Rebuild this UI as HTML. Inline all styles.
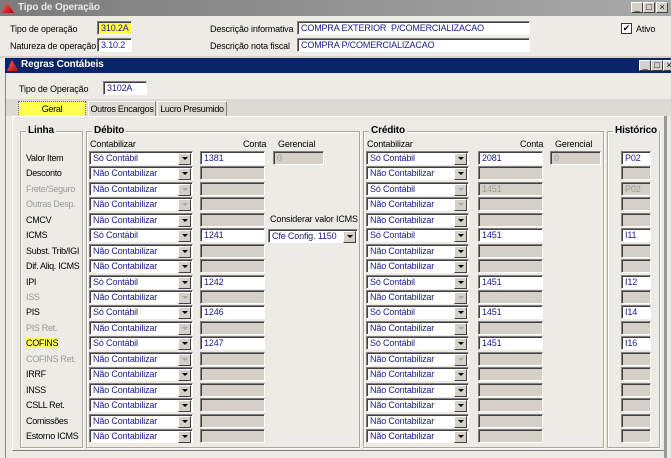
<!DOCTYPE html><html><head><meta charset="utf-8"><style>
*{box-sizing:border-box;margin:0;padding:0}
body{width:671px;height:458px;overflow:hidden;background:#ecebe6;font-family:"Liberation Sans",sans-serif;font-size:9px;letter-spacing:-0.15px;color:#000;position:relative}
.a{position:absolute;white-space:nowrap}
.t1{left:0;top:0;width:671px;height:16px;background:linear-gradient(90deg,#7b7b7b,#a9a9a9);color:#e8e8e8;font-weight:bold;font-size:10px;padding:2px 0 0 18px}
.t2{left:5px;top:58px;width:666px;height:15px;background:#0a246a;color:#fff;font-weight:bold;font-size:10px;padding:1px 0 0 16px}
.ico{position:absolute;left:2px;top:2px;width:12px;height:11px;background:linear-gradient(135deg,#f66,#a00);clip-path:polygon(0 100%,40% 0,100% 100%)}
.in{position:absolute;height:14px;background:#fff;border:1px solid;border-color:#808080 #fff #fff #808080;box-shadow:inset 1px 1px 0 #404040;color:#1a1a8c;padding:1px 0 0 3px;font-size:9px;white-space:nowrap;overflow:hidden}
.g{background:#d4d0c8;color:#999}
.sel{position:absolute;height:14px;background:#fff;border:1px solid;border-color:#808080 #fff #fff #808080;box-shadow:inset 1px 1px 0 #404040;color:#1a1a8c;padding:1px 0 0 3px;font-size:9px;white-space:nowrap}
.sel:after{content:"";position:absolute;right:1px;top:1px;width:11px;height:10px;background:#d4d0c8;border:1px solid;border-color:#fff #404040 #404040 #fff}
.sel:before{content:"";position:absolute;right:4px;top:5px;border:3px solid transparent;border-top:3px solid #000;z-index:2;border-bottom:0}
.dis:before{border-top-color:#aaa}
.row{position:absolute;left:0;width:671px;height:15px}
.lb{position:absolute;left:26px;top:2px;font-size:9px;white-space:nowrap;letter-spacing:-0.3px}
.lg{color:#999}
.grp{position:absolute;border:1px solid #aca899;box-shadow:1px 1px 0 #fff inset,1px 1px 0 #fff}
.gt{position:absolute;top:-7px;left:5px;background:#ecebe6;padding:0 2px;font-weight:bold;font-size:10px;white-space:nowrap}
.btn{position:absolute;width:12px;height:11px;background:#d4d0c8;border:1px solid;border-color:#fff #404040 #404040 #fff;font-size:9px;line-height:9px;text-align:center;color:#000}
.tab{position:absolute;top:101px;height:16px;border:1px solid;border-color:#fff #808080 transparent #fff;padding:2px 0 0;font-size:9px;text-align:center;white-space:nowrap;letter-spacing:-0.3px}
</style></head><body>
<div class="a t1"><div class="ico"></div>Tipo de Operação</div>
<div class="btn" style="left:631px;top:2px">_</div><div class="btn" style="left:643px;top:2px">□</div><div class="btn" style="left:656px;top:2px">×</div>
<div class="a" style="left:10px;top:24px">Tipo de operação</div>
<div class="in" style="left:97px;top:21px;width:35px;background:#ffff40">310.2A</div>
<div class="a" style="left:10px;top:41px">Natureza de operação</div>
<div class="in" style="left:97px;top:38px;width:35px">3.10.2</div>
<div class="a" style="left:210px;top:24px">Descrição informativa</div>
<div class="in" style="left:297px;top:21px;width:233px">COMPRA EXTERIOR&nbsp; P/COMERCIALIZACAO</div>
<div class="a" style="left:210px;top:41px">Descrição nota fiscal</div>
<div class="in" style="left:297px;top:38px;width:233px">COMPRA P/COMERCIALIZACAO</div>
<div class="a" style="left:621px;top:23px;width:11px;height:11px;border:1px solid #333;background:#fff;font-size:9px;line-height:9px;text-align:center">✔</div>
<div class="a" style="left:636px;top:24px">Ativo</div>
<div class="a" style="left:0;top:56px;width:671px;height:2px;background:#d4d0c8"></div>
<div class="a t2"><div class="ico"></div>Regras Contábeis</div>
<div class="btn" style="left:639px;top:60px">_</div><div class="btn" style="left:651px;top:60px">□</div><div class="btn" style="left:663px;top:60px">×</div>
<div class="a" style="left:5px;top:73px;width:1px;height:385px;background:#888"></div>
<div class="a" style="left:19px;top:84px">Tipo de Operação</div>
<div class="in" style="left:103px;top:81px;width:44px">3102A</div>
<div class="a" style="left:6px;top:99px;width:665px;height:17px;background:#dcdad3"></div>
<div class="tab" style="left:18px;width:68px;background:#ffff50;border:1px dotted #666">Geral</div>
<div class="tab" style="left:88px;width:68px">Outros Encargos</div>
<div class="tab" style="left:157px;width:70px">Lucro Presumido</div>
<div class="a" style="left:12px;top:116px;width:653px;height:335px;border:1px solid;border-color:#fff #808080 #808080 #fff"></div>
<div class="a" style="left:664px;top:116px;width:3px;height:342px;background:#999"></div>
<div class="grp" style="left:20px;top:131px;width:63px;height:317px"><span class="gt">Linha</span></div>
<div class="grp" style="left:86px;top:131px;width:274px;height:317px"><span class="gt">Débito</span></div>
<div class="grp" style="left:363px;top:131px;width:241px;height:317px"><span class="gt">Crédito</span></div>
<div class="grp" style="left:607px;top:131px;width:53px;height:317px"><span class="gt">Histórico</span></div>
<div class="a" style="left:90px;top:139px">Contabilizar</div>
<div class="a" style="left:243px;top:139px">Conta</div>
<div class="a" style="left:278px;top:139px">Gerencial</div>
<div class="a" style="left:367px;top:139px">Contabilizar</div>
<div class="a" style="left:520px;top:139px">Conta</div>
<div class="a" style="left:555px;top:139px">Gerencial</div>
<div class="a" style="left:270px;top:214px">Considerar valor ICMS</div>
<div class="sel" style="left:268px;top:229px;width:90px">Cfe Config. 1150</div>
<div class="in g" style="left:273px;top:151px;width:51px">0</div>
<div class="in g" style="left:550px;top:151px;width:51px">0</div>

<div class="row" style="top:151px"><span class="lb">Valor Item</span><div class="sel" style="left:89px;width:104px">Só Contábil</div><div class="in" style="left:200px;width:65px">1381</div><div class="sel" style="left:366px;width:103px">Só Contábil</div><div class="in" style="left:478px;width:65px">2081</div><div class="in" style="left:621px;width:30px">P02</div></div>
<div class="row" style="top:166px"><span class="lb">Desconto</span><div class="sel" style="left:89px;width:104px">Não Contabilizar</div><div class="in g" style="left:200px;width:65px"></div><div class="sel" style="left:366px;width:103px">Não Contabilizar</div><div class="in g" style="left:478px;width:65px"></div><div class="in g" style="left:621px;width:30px"></div></div>
<div class="row" style="top:182px"><span class="lb lg">Frete/Seguro</span><div class="sel dis" style="left:89px;width:104px">Não Contabilizar</div><div class="in g" style="left:200px;width:65px"></div><div class="sel dis" style="left:366px;width:103px">Só Contábil</div><div class="in g" style="left:478px;width:65px">1451</div><div class="in g" style="left:621px;width:30px">P02</div></div>
<div class="row" style="top:197px"><span class="lb lg">Outras Desp.</span><div class="sel dis" style="left:89px;width:104px">Não Contabilizar</div><div class="in g" style="left:200px;width:65px"></div><div class="sel dis" style="left:366px;width:103px">Não Contabilizar</div><div class="in g" style="left:478px;width:65px"></div><div class="in g" style="left:621px;width:30px"></div></div>
<div class="row" style="top:213px"><span class="lb">CMCV</span><div class="sel" style="left:89px;width:104px">Não Contabilizar</div><div class="in g" style="left:200px;width:65px"></div><div class="sel" style="left:366px;width:103px">Não Contabilizar</div><div class="in g" style="left:478px;width:65px"></div><div class="in g" style="left:621px;width:30px"></div></div>
<div class="row" style="top:228px"><span class="lb">ICMS</span><div class="sel" style="left:89px;width:104px">Só Contábil</div><div class="in" style="left:200px;width:65px">1241</div><div class="sel" style="left:366px;width:103px">Só Contábil</div><div class="in" style="left:478px;width:65px">1451</div><div class="in" style="left:621px;width:30px">I11</div></div>
<div class="row" style="top:244px"><span class="lb">Subst. Trib/IGI</span><div class="sel" style="left:89px;width:104px">Não Contabilizar</div><div class="in g" style="left:200px;width:65px"></div><div class="sel" style="left:366px;width:103px">Não Contabilizar</div><div class="in g" style="left:478px;width:65px"></div><div class="in g" style="left:621px;width:30px"></div></div>
<div class="row" style="top:259px"><span class="lb">Dif. Aliq. ICMS</span><div class="sel" style="left:89px;width:104px">Não Contabilizar</div><div class="in g" style="left:200px;width:65px"></div><div class="sel" style="left:366px;width:103px">Não Contabilizar</div><div class="in g" style="left:478px;width:65px"></div><div class="in g" style="left:621px;width:30px"></div></div>
<div class="row" style="top:275px"><span class="lb">IPI</span><div class="sel" style="left:89px;width:104px">Só Contábil</div><div class="in" style="left:200px;width:65px">1242</div><div class="sel" style="left:366px;width:103px">Só Contábil</div><div class="in" style="left:478px;width:65px">1451</div><div class="in" style="left:621px;width:30px">I12</div></div>
<div class="row" style="top:290px"><span class="lb lg">ISS</span><div class="sel dis" style="left:89px;width:104px">Não Contabilizar</div><div class="in g" style="left:200px;width:65px"></div><div class="sel dis" style="left:366px;width:103px">Não Contabilizar</div><div class="in g" style="left:478px;width:65px"></div><div class="in g" style="left:621px;width:30px"></div></div>
<div class="row" style="top:305px"><span class="lb">PIS</span><div class="sel" style="left:89px;width:104px">Só Contábil</div><div class="in" style="left:200px;width:65px">1246</div><div class="sel" style="left:366px;width:103px">Só Contábil</div><div class="in" style="left:478px;width:65px">1451</div><div class="in" style="left:621px;width:30px">I14</div></div>
<div class="row" style="top:321px"><span class="lb lg">PIS Ret.</span><div class="sel dis" style="left:89px;width:104px">Não Contabilizar</div><div class="in g" style="left:200px;width:65px"></div><div class="sel dis" style="left:366px;width:103px">Não Contabilizar</div><div class="in g" style="left:478px;width:65px"></div><div class="in g" style="left:621px;width:30px"></div></div>
<div class="row" style="top:336px"><span class="lb" style="background:#ffff50">COFINS</span><div class="sel" style="left:89px;width:104px">Só Contábil</div><div class="in" style="left:200px;width:65px">1247</div><div class="sel" style="left:366px;width:103px">Só Contábil</div><div class="in" style="left:478px;width:65px">1451</div><div class="in" style="left:621px;width:30px">I16</div></div>
<div class="row" style="top:352px"><span class="lb lg">COFINS Ret.</span><div class="sel dis" style="left:89px;width:104px">Não Contabilizar</div><div class="in g" style="left:200px;width:65px"></div><div class="sel dis" style="left:366px;width:103px">Não Contabilizar</div><div class="in g" style="left:478px;width:65px"></div><div class="in g" style="left:621px;width:30px"></div></div>
<div class="row" style="top:367px"><span class="lb">IRRF</span><div class="sel" style="left:89px;width:104px">Não Contabilizar</div><div class="in g" style="left:200px;width:65px"></div><div class="sel" style="left:366px;width:103px">Não Contabilizar</div><div class="in g" style="left:478px;width:65px"></div><div class="in g" style="left:621px;width:30px"></div></div>
<div class="row" style="top:383px"><span class="lb">INSS</span><div class="sel" style="left:89px;width:104px">Não Contabilizar</div><div class="in g" style="left:200px;width:65px"></div><div class="sel" style="left:366px;width:103px">Não Contabilizar</div><div class="in g" style="left:478px;width:65px"></div><div class="in g" style="left:621px;width:30px"></div></div>
<div class="row" style="top:398px"><span class="lb">CSLL Ret.</span><div class="sel" style="left:89px;width:104px">Não Contabilizar</div><div class="in g" style="left:200px;width:65px"></div><div class="sel" style="left:366px;width:103px">Não Contabilizar</div><div class="in g" style="left:478px;width:65px"></div><div class="in g" style="left:621px;width:30px"></div></div>
<div class="row" style="top:414px"><span class="lb">Comissões</span><div class="sel" style="left:89px;width:104px">Não Contabilizar</div><div class="in g" style="left:200px;width:65px"></div><div class="sel" style="left:366px;width:103px">Não Contabilizar</div><div class="in g" style="left:478px;width:65px"></div><div class="in g" style="left:621px;width:30px"></div></div>
<div class="row" style="top:429px"><span class="lb">Estorno ICMS</span><div class="sel" style="left:89px;width:104px">Não Contabilizar</div><div class="in g" style="left:200px;width:65px"></div><div class="sel" style="left:366px;width:103px">Não Contabilizar</div><div class="in g" style="left:478px;width:65px"></div><div class="in g" style="left:621px;width:30px"></div></div>
</body></html>
